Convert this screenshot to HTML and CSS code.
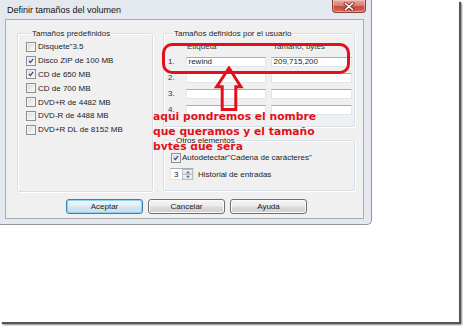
FILE: index.html
```html
<!DOCTYPE html>
<html lang="es">
<head>
<meta charset="utf-8">
<title>Definir tamaños del volumen</title>
<link rel="stylesheet" href="styles.css">
</head>
<body>
<div class="page">
  <div class="dialog">
    <div class="titlebar">
      <span class="title">Definir tamaños del volumen</span>
      <span class="close">
        <svg width="12" height="9" viewBox="0 0 12 9"><path d="M2.5 1.5 L9.5 7.5 M9.5 1.5 L2.5 7.5" stroke="#6b2a24" stroke-width="3.2" stroke-linecap="square"/><path d="M2.5 1.5 L9.5 7.5 M9.5 1.5 L2.5 7.5" stroke="#fff" stroke-width="1.6" stroke-linecap="square"/></svg>
      </span>
    </div>
    <div class="client">
      <div class="columns">
        <fieldset class="group presets">
          <legend>Tamaños predefinidos</legend>
          <label class="cb"><span class="box"></span>Disquete"3.5</label>
          <label class="cb"><span class="box checked"><svg viewBox="0 0 10 10"><path d="M2.4 4.8 L4.2 7 L7.8 2.4" fill="none" stroke="#2c3f93" stroke-width="1.4"/></svg></span>Disco ZIP de 100 MB</label>
          <label class="cb"><span class="box checked"><svg viewBox="0 0 10 10"><path d="M2.4 4.8 L4.2 7 L7.8 2.4" fill="none" stroke="#2c3f93" stroke-width="1.4"/></svg></span>CD de 650 MB</label>
          <label class="cb"><span class="box"></span>CD de 700 MB</label>
          <label class="cb"><span class="box"></span>DVD+R de 4482 MB</label>
          <label class="cb"><span class="box"></span>DVD-R de 4488 MB</label>
          <label class="cb"><span class="box"></span>DVD+R DL de 8152 MB</label>
        </fieldset>
        <div class="rightcol">
          <fieldset class="group user">
            <legend>Tamaños definidos por el usuario</legend>
            <div class="sizes">
              <span></span><span class="hdr">Etiqueta</span><span class="hdr">Tamaño, bytes</span>
              <span class="num">1.</span><span class="field">rewind</span><span class="field">209,715,200</span>
              <span class="num">2.</span><span class="field"></span><span class="field"></span>
              <span class="num">3.</span><span class="field"></span><span class="field"></span>
              <span class="num">4.</span><span class="field"></span><span class="field"></span>
            </div>
          </fieldset>
          <fieldset class="group otros">
            <legend>Otros elementos</legend>
            <label class="cb auto"><span class="box checked"><svg viewBox="0 0 10 10"><path d="M2.4 4.8 L4.2 7 L7.8 2.4" fill="none" stroke="#2c3f93" stroke-width="1.4"/></svg></span>Autodetectar"Cadena de carácteres"</label>
            <div class="histrow">
              <span class="spin"><span class="spinval">3</span><span class="spinbtns"><span class="sb"><svg viewBox="0 0 6 4"><path d="M1 3.2 L3 1 L5 3.2Z" fill="#5a6a80"/></svg></span><span class="sb"><svg viewBox="0 0 6 4"><path d="M1 0.8 L3 3 L5 0.8Z" fill="#5a6a80"/></svg></span></span></span>
              <span>Historial de entradas</span>
            </div>
          </fieldset>
        </div>
      </div>
      <div class="buttons">
        <span class="btn default">Aceptar</span>
        <span class="btn">Cancelar</span>
        <span class="btn">Ayuda</span>
      </div>
    </div>
  </div>

  <div class="mark-box"></div>
  <svg class="mark-arrow" width="30" height="46" viewBox="0 0 30 46"><path d="M15 2 L2.7 20.7 L8.2 20.7 L8.2 43.5 L21.8 43.5 L21.8 20.7 L26.9 20.7 Z" fill="none" stroke="#e3101b" stroke-width="3" stroke-linejoin="miter"/></svg>
  <div class="mark-text">aqui pondremos el nombre<br>que queramos y el tamaño<br>bytes que sera</div>
</div>
</body>
</html>
```
FILE: styles.css
```css
* { box-sizing: border-box; margin: 0; padding: 0; }
html, body { background: #fff; }
body {
  width: 463px; height: 326px; overflow: hidden;
  font-family: "Liberation Sans", Arial, sans-serif;
  font-size: 8px; line-height: 9px; color: #1c1c1c;
}
.page {
  position: relative;
  width: 459px; height: 322px;
  background: #fff;
  box-shadow: 2px 2px 1px #555, 3px 3px 2px #999;
}
.dialog {
  width: 372px; height: 225px;
  display: flex; flex-direction: column;
  background: #e4e9ef;
  border-right: 1px solid #8f959c;
  border-bottom: 1px solid #8f959c;
  border-radius: 0 0 5px 0;
  padding: 0 7px 5px 5px;
}
.titlebar {
  height: 19px; flex: none;
  display: flex; justify-content: space-between; align-items: flex-start;
}
.title {
  font-size: 9px; line-height: 10px; color: #111;
  margin: 5px 0 0 2px;
}
.close {
  width: 34px; height: 13px; margin-right: -2px;
  display: flex; align-items: center; justify-content: center;
  border: 1px solid #8a3f37; border-top: none;
  border-radius: 0 0 4px 4px;
  background: linear-gradient(#e9a89c 0%, #d98273 45%, #c9493c 55%, #d66a5c 100%);
  box-shadow: inset 0 0 0 1px rgba(255,220,210,.45);
}
.client {
  flex: 1;
  background: #f0f0f0;
  border: 1px solid #a7adb5;
  padding: 9px 8px 4px 11px;
  display: flex; flex-direction: column; gap: 7px;
}
.columns { display: flex; gap: 10px; height: 163px; }
.group {
  border: 1px solid #d5dfe5;
  box-shadow: inset 1px 1px 0 #fff, 1px 1px 0 #fff;
  border-radius: 2px;
  min-width: 0;
}
.group legend {
  margin-left: 5px; padding: 0 1px;
  font-size: 8px; line-height: 9px; color: #1c1c1c;
}
.presets { width: 136px; height: 163px; padding: 2px 0 0 8px; }
.cb { display: flex; align-items: center; gap: 2px; height: 13.8px; white-space: nowrap; }
.box {
  width: 10px; height: 10px; flex: none;
  border: 1px solid #8e8f8f;
  background: linear-gradient(135deg, #d4d6d8 0%, #eceef0 60%, #fbfbfb 100%);
  box-shadow: inset 0 0 0 1px #f2f3f4;
  display: flex;
}
.box svg { width: 100%; height: 100%; }
.rightcol { width: 192px; display: flex; flex-direction: column; }
.user { height: 98px; padding: 4px 0 0 4px; }
.sizes {
  display: grid;
  grid-template-columns: 13px 80px 81px;
  column-gap: 5px; row-gap: 3px;
  grid-template-rows: 9px 13px 13px 13px 13px;
}
.sizes .hdr { padding-left: 1px; margin-bottom: -2.5px; color: #333; }
.sizes .hdr + .hdr { padding-left: 2px; }
.num { display: flex; align-items: center; margin-top: 2.5px; color: #333; }
.field {
  background: #fff;
  border: 1px solid #e1e6ec; border-top-color: #abadb3;
  display: flex; align-items: center; padding-left: 1.5px;
  margin-top: 2.5px;
}
.otros { margin-top: 8.5px; height: 55.5px; padding: 8px 0 0 6px; }
.cb.auto { height: 10px; padding-left: 1px; gap: 1px; }
.histrow { display: flex; align-items: center; gap: 4px; margin-top: 5.5px; }
.spin {
  width: 24px; height: 12px;
  background: #fff;
  border: 1px solid #e1e6ec; border-top-color: #abadb3;
  display: flex;
}
.spinval { flex: 1; padding-left: 3px; display: flex; align-items: center; }
.spinbtns { width: 11px; display: flex; flex-direction: column; }
.sb {
  flex: 1; display: flex; align-items: center; justify-content: center;
  background: linear-gradient(#f3f5f8, #dfe4ea);
  border: 1px solid #b5bcc6;
}
.sb + .sb { border-top: none; }
.sb svg { width: 6px; height: 4px; }
.buttons { display: flex; justify-content: center; gap: 5px; padding-left: 1px; }
.btn {
  width: 77px; height: 15px;
  display: flex; align-items: center; justify-content: center;
  border: 1px solid #707070; border-radius: 3px;
  background: linear-gradient(#f4f4f4 0%, #ebebeb 48%, #dcdcdc 52%, #d0d0d0 100%);
  box-shadow: inset 0 0 0 1px #fbfbfb;
  color: #1c1c1c;
}
.btn.default {
  border-color: #3c7fb1;
  box-shadow: inset 0 0 0 1px #8fd0f4;
  background: linear-gradient(#eef6fb 0%, #e3eef6 48%, #d3e5f1 52%, #c9dfee 100%);
}
.mark-box {
  position: absolute; left: 162px; top: 43px;
  width: 188px; height: 31px;
  border: 3px solid #e3101b; border-radius: 10px;
}
.mark-arrow { position: absolute; left: 214px; top: 66px; }
.mark-text {
  position: absolute; left: 153px; top: 109px;
  height: 41px; overflow: hidden; width: 200px;
  font-family: "DejaVu Sans", Verdana, sans-serif;
  font-weight: bold; font-size: 10.75px; line-height: 15px;
  color: #e3101b; white-space: nowrap;
}
```
